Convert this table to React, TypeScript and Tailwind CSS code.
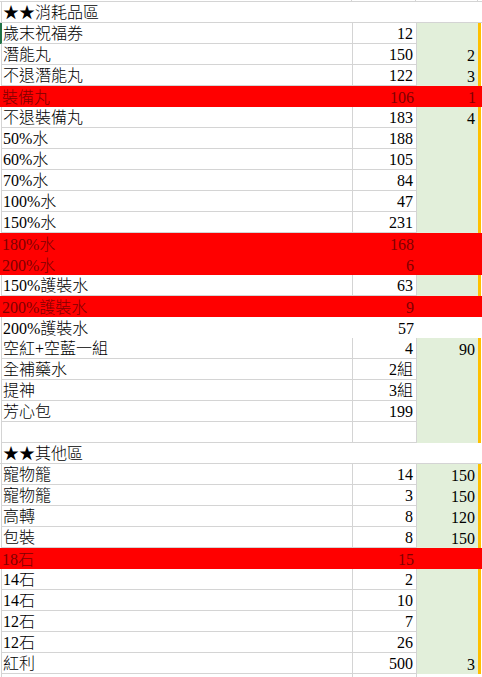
import React from "react";

type Row = {
  kind?: "title" | "red" | "white";
  a: string;
  b?: string;
  c?: string;
  mark?: boolean;
};

const rows: Row[] = [
  { kind: "title", a: "★★消耗品區" },
  { a: "歲末祝福券", b: "12", mark: true },
  { a: "潛能丸", b: "150", c: "2" },
  { a: "不退潛能丸", b: "122", c: "3" },
  { kind: "red", a: "裝備丸", b: "106", c: "1" },
  { a: "不退裝備丸", b: "183", c: "4" },
  { a: "50%水", b: "188" },
  { a: "60%水", b: "105" },
  { a: "70%水", b: "84" },
  { a: "100%水", b: "47" },
  { a: "150%水", b: "231" },
  { kind: "red", a: "180%水", b: "168" },
  { kind: "red", a: "200%水", b: "6" },
  { a: "150%護裝水", b: "63" },
  { kind: "red", a: "200%護裝水", b: "9" },
  { kind: "white", a: "200%護裝水", b: "57" },
  { a: "空紅+空藍一組", b: "4", c: "90" },
  { a: "全補藥水", b: "2組" },
  { a: "提神", b: "3組" },
  { a: "芳心包", b: "199" },
  { a: "", b: "" },
  { kind: "title", a: "★★其他區" },
  { a: "寵物籠", b: "14", c: "150" },
  { a: "寵物籠", b: "3", c: "150" },
  { a: "高轉", b: "8", c: "120" },
  { a: "包裝", b: "8", c: "150" },
  { kind: "red", a: "18石", b: "15" },
  { a: "14石", b: "2" },
  { a: "14石", b: "10" },
  { a: "12石", b: "7" },
  { a: "12石", b: "26" },
  { a: "紅利", b: "500", c: "3" },
];

const font = {
  fontFamily: '"Liberation Serif", "Noto Sans CJK TC", serif',
};

function Cell({ text, right, cls }: { text?: string; right?: boolean; cls: string }) {
  return (
    <div className={`${cls} flex items-end h-full overflow-visible whitespace-nowrap ${right ? "justify-end pr-[3px]" : "pl-[1px]"}`}>
      <span className="leading-[17px] pb-[1px] text-[16px] font-light">{text}</span>
    </div>
  );
}

function SheetRow({ r }: { r: Row }) {
  if (r.kind === "title") {
    return (
      <div className="flex h-[21px] border-b border-[#d4d4d4] bg-white text-black">
        <div className="w-[1px] shrink-0" />
        <div className="flex-1 border-l border-[#d4d4d4] flex items-end pl-[1px]">
          <span className="leading-[17px] pb-[1px] text-[16px] font-light">{r.a}</span>
        </div>
      </div>
    );
  }
  if (r.kind === "red") {
    return (
      <div className="flex h-[21px] bg-[#ff0000] text-[#800000]">
        <div className="w-[1px] shrink-0" />
        <Cell text={r.a} cls="w-[352px] shrink-0 pl-[1px]" />
        <Cell text={r.b} right cls="w-[64px] shrink-0" />
        <Cell text={r.c} right cls="w-[62px] shrink-0" />
      </div>
    );
  }
  if (r.kind === "white") {
    return (
      <div className="flex h-[21px] bg-white text-black">
        <div className="w-[1px] shrink-0" />
        <Cell text={r.a} cls="w-[352px] shrink-0 border-l border-[#d4d4d4]" />
        <Cell text={r.b} right cls="w-[64px] shrink-0" />
        <Cell text={r.c} right cls="w-[62px] shrink-0" />
      </div>
    );
  }
  return (
    <div className="flex h-[21px] text-black bg-white">
      <div className={`w-[1px] shrink-0 ${r.mark ? "bg-[#217346]" : "bg-white"}`} />
      <Cell
        text={r.a}
        cls={`w-[352px] shrink-0 border-l border-r border-b border-[#d4d4d4] ${r.mark ? "border-l-[#217346]" : ""}`}
      />
      <Cell text={r.b} right cls="w-[64px] shrink-0 border-r border-b border-[#d4d4d4]" />
      <Cell text={r.c} right cls="w-[61px] shrink-0 bg-[#e2efda]" />
      <div className="w-[3px] shrink-0 bg-[#ffc000]" />
    </div>
  );
}

export default function App() {
  return (
    <div className="w-[482px] h-[677px] overflow-hidden bg-white" style={font}>
      <div className="flex h-[2px] border-b border-[#d4d4d4]">
        <div className="w-[352px] shrink-0 border-r border-[#d4d4d4]" />
        <div className="w-[64px] shrink-0 border-r border-[#d4d4d4]" />
        <div className="w-[62px] shrink-0 border-r border-[#d4d4d4]" />
      </div>
      {rows.map((r, i) => (
        <SheetRow key={i} r={r} />
      ))}
      <div className="flex h-[4px]">
        <div className="w-[1px] shrink-0" />
        <div className="w-[352px] shrink-0 border-l border-r border-[#d4d4d4]" />
        <div className="w-[64px] shrink-0 border-r border-[#d4d4d4]" />
      </div>
    </div>
  );
}
